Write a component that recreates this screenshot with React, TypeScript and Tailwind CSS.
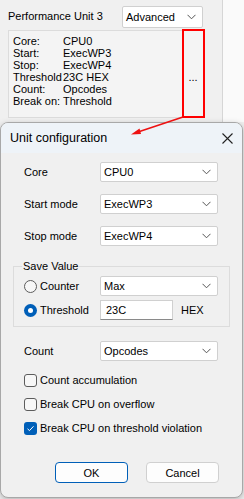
import { useState } from "react";

function Chevron() {
  return (
    <svg width="9" height="6" viewBox="0 0 9 6" className="shrink-0">
      <path d="M0.5 0.8 L4.5 4.8 L8.5 0.8" fill="none" stroke="#555" strokeWidth="1" />
    </svg>
  );
}

function Dropdown({ value, className = "" }: { value: string; className?: string }) {
  return (
    <div
      className={`flex h-[20px] w-[118px] items-center justify-between rounded-[2px] border border-[#d0d0d0] bg-white pl-[3px] pr-[6px] ${className}`}
    >
      <span>{value}</span>
      <Chevron />
    </div>
  );
}

function Checkbox({ label, checked }: { label: string; checked?: boolean }) {
  return (
    <div className="flex h-[14px] items-center gap-[3px] pl-[11px]">
      {checked ? (
        <span className="flex h-[13px] w-[13px] items-center justify-center rounded-[3px] bg-[#005fb8]">
          <svg width="9" height="9" viewBox="0 0 9 9">
            <path d="M1.5 4.8 L3.5 6.6 L7.5 2.3" fill="none" stroke="#fff" strokeWidth="1" />
          </svg>
        </span>
      ) : (
        <span className="h-[13px] w-[13px] rounded-[3px] border border-[#5c5c5c] bg-[#f7f7f7]" />
      )}
      <span>{label}</span>
    </div>
  );
}

function Radio({ label, checked }: { label: string; checked?: boolean }) {
  return (
    <div className="flex w-[76px] items-center gap-[3px]">
      {checked ? (
        <span className="flex h-[13px] w-[13px] items-center justify-center rounded-full bg-[#005fb8]">
          <span className="h-[5px] w-[5px] rounded-full bg-white" />
        </span>
      ) : (
        <span className="h-[13px] w-[13px] rounded-full border border-[#5c5c5c] bg-[#f7f7f7]" />
      )}
      <span>{label}</span>
    </div>
  );
}

export default function App() {
  const [mode] = useState("Advanced");
  const info = [
    ["Core:", "CPU0"],
    ["Start:", "ExecWP3"],
    ["Stop:", "ExecWP4"],
    ["Threshold", "23C HEX"],
    ["Count:", "Opcodes"],
    ["Break on:", "Threshold"],
  ];

  return (
    <div className="relative h-[499px] w-[244px] overflow-hidden bg-[#f0f0f0] font-['Liberation_Sans',Arial,sans-serif] text-[11px] leading-[14px] text-black">
      {/* background window */}
      <div className="flex h-[122px]">
        <div className="w-[222px] pl-[8px] pt-[6px]">
          <div className="flex h-[22px] items-center justify-between pr-[19px]">
            <span className="pb-[2px]">Performance Unit 3</span>
            <div className="flex h-[22px] w-[81px] items-center justify-between rounded-[2px] border border-[#d0d0d0] bg-white pl-[3px] pr-[6px]">
              <span>{mode}</span>
              <Chevron />
            </div>
          </div>
          <div className="mt-[2px] flex h-[88px] w-[197px] justify-between border border-[#dcdcdc] bg-[#f4f4f4] pl-[4px] pt-[4px]">
            <div className="flex flex-col">
              {info.map(([k, v]) => (
                <div key={k} className="flex h-[12px] items-center whitespace-nowrap">
                  <span className="w-[50px]">{k}</span>
                  <span>{v}</span>
                </div>
              ))}
            </div>
            <div className="flex w-[22px] items-center justify-center pt-[2px]">...</div>
          </div>
        </div>
        <div className="w-[22px] border-l border-[#d6d6d6] bg-[#fafafa]" />
      </div>

      {/* annotation */}
      <div className="absolute left-[182px] top-[29px] h-[89px] w-[23px] border-2 border-[#ff0000]" />

      {/* dialog */}
      <div className="absolute left-0 top-[122px] flex h-[376px] w-[243px] flex-col overflow-hidden rounded-[8px] border border-[#a8a8a8] bg-[#f0f0f0] shadow-[0_2px_6px_rgba(0,0,0,0.25)]">
        <div className="flex h-[30px] shrink-0 items-center justify-between bg-[#eef3f8] pl-[9px] pr-[9px]">
          <span className="text-[12.5px]">Unit configuration</span>
          <svg width="11" height="11" viewBox="0 0 11 11">
            <path d="M0.5 0.5 L10.5 10.5 M10.5 0.5 L0.5 10.5" stroke="#222" strokeWidth="1.1" />
          </svg>
        </div>

        <div className="flex flex-col px-[12px] pt-[9px]">
          <div className="flex items-center pl-[11px]">
            <span className="w-[76px]">Core</span>
            <Dropdown value="CPU0" />
          </div>
          <div className="mt-[12px] flex items-center pl-[11px]">
            <span className="w-[76px]">Start mode</span>
            <Dropdown value="ExecWP3" />
          </div>
          <div className="mt-[12px] flex items-center pl-[11px]">
            <span className="w-[76px]">Stop mode</span>
            <Dropdown value="ExecWP4" />
          </div>

          <div className="relative mt-[20px] h-[61px] w-[217px] border border-[#dcdcdc] pl-[10px] pt-[9px]">
            <span className="absolute left-[8px] top-[-8px] bg-[#f0f0f0] px-[1px]">Save Value</span>
            <div className="flex items-center">
              <Radio label="Counter" />
              <Dropdown value="Max" />
            </div>
            <div className="mt-[4px] flex items-center">
              <Radio label="Threshold" checked />
              <div className="flex h-[20px] w-[73px] items-center border border-[#d0d0d0] border-b-[#8a8a8a] bg-white pl-[5px]">
                23C
              </div>
              <span className="ml-[8px]">HEX</span>
            </div>
          </div>

          <div className="mt-[14px] flex items-center pl-[11px]">
            <span className="w-[76px]">Count</span>
            <Dropdown value="Opcodes" />
          </div>

          <div className="mt-[12px] flex flex-col gap-[10px]">
            <Checkbox label="Count accumulation" />
            <Checkbox label="Break CPU on overflow" />
            <Checkbox label="Break CPU on threshold violation" checked />
          </div>

          <div className="mt-[27px] flex gap-[18px] pl-[42px]">
            <button className="flex h-[21px] w-[73px] items-center justify-center rounded-[4px] border border-[#005fb8] bg-[#fdfdfd]">
              OK
            </button>
            <button className="flex h-[21px] w-[73px] items-center justify-center rounded-[4px] border border-[#d0d0d0] bg-[#fdfdfd]">
              Cancel
            </button>
          </div>
        </div>
      </div>

      <svg className="pointer-events-none absolute left-0 top-0" width="244" height="499">
        <line x1="183" y1="117" x2="138" y2="132" stroke="#ee1111" strokeWidth="1.5" />
        <path d="M131 134.5 L139.5 128.5 L141 134 Z" fill="#ee1111" />
      </svg>
    </div>
  );
}
